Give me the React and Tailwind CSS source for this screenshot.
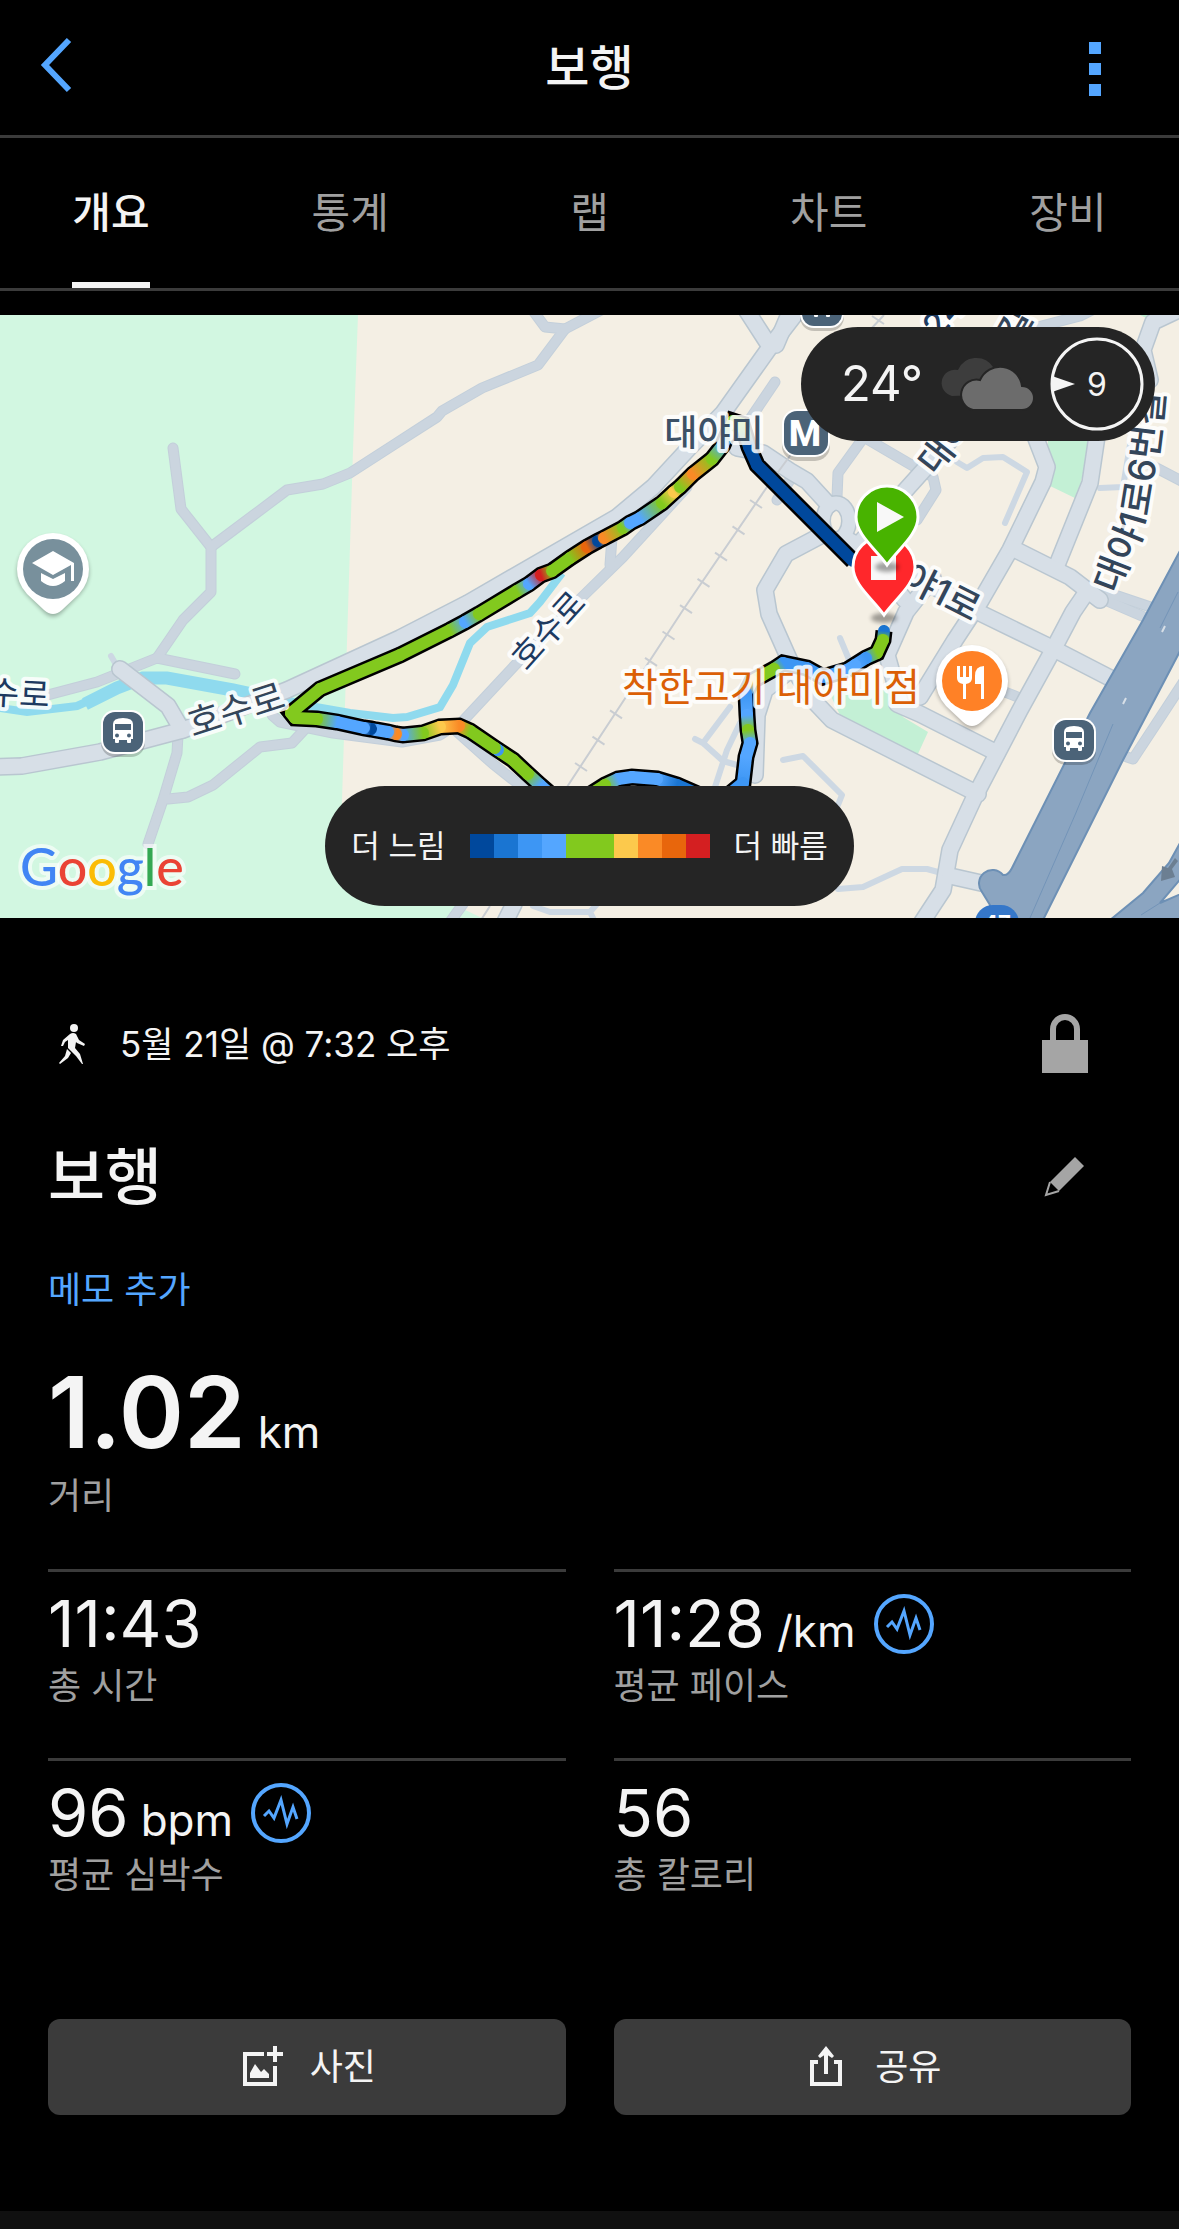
import { useState } from "react";

const TABS = ["개요", "통계", "랩", "차트", "장비"];

const LEGEND = [
  "bg-[#00489c]",
  "bg-[#1a75d2]",
  "bg-[#3d96f4]",
  "bg-[#54a6ff]",
  "bg-[#82c91e]",
  "bg-[#82c91e]",
  "bg-[#fcc94c]",
  "bg-[#fa8a26]",
  "bg-[#e8660c]",
  "bg-[#d41f21]",
];

const STATS = [
  { value: "11:43", label: "총 시간" },
  { value: "11:28", unit: "/km", label: "평균 페이스", chart: true },
  { value: "96", unit: "bpm", label: "평균 심박수", chart: true },
  { value: "56", label: "총 칼로리" },
];

// pace colours
const N = "#00489c";
const D = "#1a75d2";
const B = "#54a6ff";
const M = "#3d96f4";
const G = "#82c91e";
const Y = "#fcc94c";
const O = "#fa8a26";
const P = "#e8660c";
const R = "#d41f21";

const TRACK = [
  [884, 631, D], [883, 640, G], [877, 653, G], [866, 658, M], [855, 665, B], [847, 670, B],
  [823, 677, M], [807, 668, M], [783, 663, M], [774, 669, G], [763, 675, G], [752, 681, Y],
  [746, 693, M], [747, 715, B], [748, 730, G], [750, 743, B], [746, 757, B], [743, 783, M],
  [726, 797, M], [700, 795, D], [677, 785, D], [657, 779, B], [632, 777, B], [618, 779, B], [605, 785, G],
  [583, 799, G], [556, 799, B], [540, 785, B], [528, 774, G], [513, 760, G], [501, 752, G],
  [498, 750, M], [495, 748, G], [470, 731, G], [459, 726, O], [440, 727, Y], [423, 733, G],
  [403, 735, B], [396, 734, O], [388, 732, B], [376, 730, B], [371, 729, N], [364, 728, B],
  [337, 722, B], [317, 719, G], [295, 718, G], [291, 713, G], [320, 689, G], [400, 655, G], [450, 630, G],
  [465, 622, B], [479, 614, G], [517, 591, G], [529, 584, B], [541, 575, R], [552, 571, G], [570, 558, G], [587, 547, P],
  [598, 541, N], [604, 538, O], [623, 528, G], [630, 523, B], [640, 518, B], [662, 503, G],
  [674, 492, Y], [680, 487, G], [693, 474, O], [712, 459, G], [723, 445, B], [733, 421, G],
  [742, 424, G], [749, 447, N], [757, 465, N], [790, 498, N], [853, 561, N],
];

const MAJOR = [
  "M-10 767 L22 766 L100 752 L183 730 L287 690 L400 638 L468 603 L617 517 L653 487 L690 447 L723 413 L770 347 L800 308",
  "M120 669 L168 706 L182 730",
  "M767 342 L745 308",
  "M737 448 L763 453 L790 471 L807 481 L829 505",
  "M820 536 L786 554 L765 590 L769 614 L793 668 L813 700 L832 720 L897 753 L978 794",
  "M793 668 L765 690 L757 715 L755 775",
  "M905 600 L860 543 L903 493 L957 433",
  "M848 540 L905 570 L980 613 L1050 647 L1112 679",
  "M933 578 L906 612 L887 655 L901 705",
  "M897 704 L920 714 L997 753",
  "M1035 436 L1047 467 L1043 482 L1010 550 L980 602 L955 640 L920 697",
  "M1097 436 L1090 483 L1057 565",
  "M1012 548 L1070 577 L1100 600",
  "M1088 590 L1073 612 L1053 650 L1020 710 L974 798 L950 850 L943 890 L922 922",
  "M950 876 L990 885",
  "M1200 300 L1153 322 L1143 350 L1150 380",
  "M795 300 L776 345",
  "M514 904 L504 924",
];

const MINOR = [
  "M173 448 L181 509 L211 547 L211 592 L183 620 L157 658",
  "M211 547 L287 490 L323 484 L350 473 L395 444 L437 417 L442 411 L482 388 L538 365 L565 329 L545 327 L531 308",
  "M565 329 L605 308",
  "M40 697 L97 682 L157 658 L235 674",
  "M178 735 L177 753 L163 800 L148 844",
  "M168 799 L188 797 L213 785 L260 747 L292 743 L306 728",
  "M272 715 L280 722 L333 733 L402 742 L440 735 L457 724",
  "M455 730 L493 764 L526 790",
  "M462 722 L517 663 L577 602 L623 557 L687 487",
  "M612 537 L610 565",
  "M775 382 L748 422",
  "M837 497 L838 473 L864 437",
  "M862 436 L920 470 L933 477 L936 490 L917 520",
  "M1100 590 L1180 617",
  "M1005 692 L1020 698",
  "M1145 462 L1195 488",
  "M1190 672 L1160 718 L1133 759 L1127 757",
  "M463 904 L450 922",
  "M790 480 L777 500",
  "M1030 329 L1080 316 L1100 306",
  "M1105 600 L1142 616",
];

const THIN = [
  "M111 656 L118 668",
  "M957 462 L967 468 L983 458 L1003 457 L1027 472 L1005 523",
  "M1100 488 L1123 487 L1130 445",
  "M783 760 L803 756 L842 795 L838 805",
  "M838 889 L863 887 L902 869 L927 869 L938 872",
  "M840 638 L850 662",
  "M730 707 L703 743 L695 739 M703 743 L723 761 L737 765 M740 723 L727 750 L715 787",
  "M533 906 L550 912 L590 912 L597 904 M590 912 L595 922",
];

const TIES = Array.from({ length: 13 }, (_, i) => [756 - i * 17.5, 504 + i * 26.3]).filter(([, y]) => y < 795);

function MapLabel({ size = 36, fill = "#33455a", weight = 500, ...rest }) {
  return (
    <text
      fontSize={size}
      fontWeight={weight}
      fill={fill}
      stroke="#ffffff"
      strokeOpacity="0.85"
      strokeWidth="8"
      strokeLinejoin="round"
      paintOrder="stroke"
      {...rest}
    />
  );
}

function BusStop({ x, y }) {
  return (
    <g transform={`translate(${x} ${y})`}>
      <rect x="-22" y="-19" width="44" height="44" rx="14" fill="#000" opacity="0.2" />
      <rect x="-22" y="-22" width="44" height="44" rx="14" fill="#fff" />
      <rect x="-20" y="-20" width="40" height="40" rx="12" fill="#4b6378" />
      <path
        fillRule="evenodd"
        fill="#fff"
        d="M-10 -8 Q-10 -14 0 -14 Q10 -14 10 -8 V7 H8 V10 Q8 11 7 11 H5 Q4 11 4 10 V8 H-4 V10 Q-4 11 -5 11 H-7 Q-8 11 -8 10 V7 H-10 Z M-8 -8 V-2 H8 V-8 Z M-6 1.500 A2 2 0 1 0 -6 5.500 A2 2 0 1 0 -6 1.500 Z M6 1.500 A2 2 0 1 0 6 5.500 A2 2 0 1 0 6 1.500 Z"
      />
    </g>
  );
}

function PlacePin({ x, y, color, children }) {
  return (
    <g transform={`translate(${x} ${y})`}>
      <path d="M-36 3 A36 36 0 1 1 36 3 Q36 15 26 26 L9 43 Q0 52 -9 43 L-26 26 Q-36 15 -36 3 Z" fill="#000" opacity="0.3" className="blur-[2px]" />
      <path d="M-36 0 A36 36 0 1 1 36 0 Q36 14 26 25 L9 41 Q0 49 -9 41 L-26 25 Q-36 14 -36 0 Z" fill="#fff" />
      <circle r="30" fill={color} />
      {children}
    </g>
  );
}

function RouteMap() {
  const line = TRACK.map(([x, y]) => `${x},${y}`).join(" ");

  return (
    <svg
      className="block h-full w-full font-['Inter','Noto_Sans_CJK_KR',sans-serif]"
      viewBox="0 315 1179 603"
      preserveAspectRatio="xMidYMid slice"
      role="img"
      aria-label="경로 지도"
    >
      <defs>
        {TRACK.slice(1).map(([x, y, c], i) => (
          <linearGradient key={i} id={`seg${i}`} gradientUnits="userSpaceOnUse" x1={TRACK[i][0]} y1={TRACK[i][1]} x2={x} y2={y}>
            <stop offset="0" stopColor={TRACK[i][2]} />
            <stop offset="1" stopColor={c} />
          </linearGradient>
        ))}
        <path id="street6" d="M1118 595 C1128 562 1142 545 1149 510 C1157 460 1162 440 1168 340" />
      </defs>

      {/* Terrain */}
      <rect x="-600" y="315" width="2400" height="603" fill="#f4efe4" />
      <path d="M-600 315 H358 L353 450 L348 610 L342 800 L340 860 L457 906 L482 918 H-600 Z" fill="#d2f7e1" />
      <path d="M1048 430 H1089 L1086 460 L1077 499 L1048 485 Z M828 690 L890 690 L903 717 L928 732 L917 756 L840 715 Z M1140 315 H1150 L1148 319 Z" fill="#c3f0d5" />

      {/* Water */}
      <g fill="none" stroke="#8fdaee">
        <path d="M0 708 L27 712 L77 706 L117 688" strokeWidth="8" />
        <path d="M85 704 L117 688 L143 678 L167 678 L233 690 L290 702" strokeWidth="13" />
        <path d="M285 700 L310 706 L350 713 L393 718 L407 717 L440 707 L453 685 L470 643 L487 627 L530 613 L540 602 L562 573" strokeWidth="8" />
      </g>

      {/* Roads */}
      <g fill="none" strokeLinecap="round" strokeLinejoin="round">
        {THIN.map((d) => (
          <path key={d} d={d} stroke="#cdd8e3" strokeWidth="6" />
        ))}
        {MINOR.map((d) => (
          <path key={d} d={d} stroke="#c3cfda" strokeWidth="11" />
        ))}
        {MINOR.map((d) => (
          <path key={d} d={d} stroke="#cbd5df" strokeWidth="9" />
        ))}
        {MAJOR.map((d) => (
          <path key={d} d={d} stroke="#b9c6d0" strokeWidth="18" />
        ))}
        <ellipse cx="836" cy="521" rx="13" ry="18" stroke="#b9c6d0" strokeWidth="16" />
        {MAJOR.map((d) => (
          <path key={d} d={d} stroke="#d7dfe7" strokeWidth="15" />
        ))}
        <ellipse cx="836" cy="521" rx="13" ry="18" stroke="#d7dfe7" strokeWidth="13" />
      </g>

      {/* Railway */}
      <g stroke="#c9cdd2" fill="none">
        <path d="M795 449 L767 487 L683 610 L565 790 M490 906 L481 920 M884 315 L870 330" strokeWidth="2" />
        {TIES.map(([x, y]) => (
          <path key={x} d={`M${x - 6} ${y - 4} l12 8`} strokeWidth="2" />
        ))}
        <path d="M872 316 l12 8" strokeWidth="2" />
      </g>

      {/* Expressway */}
      <g fill="#8ba5c1" stroke="#6d90b5" strokeWidth="2">
        <path d="M1190 532 L1143 620 L1090 713 L1012 868 Q1008 876 1003 875 A13 13 0 0 0 982 892 L990 905 L990 930 H1038 L1123 760 L1190 632 Z" />
        <path d="M1190 825 L1169 863 L1143 893 L1104 925 H1190 Z" />
        <path d="M1190 868 L1160 903 L1190 890 Z" fill="#f4efe4" />
      </g>
      <path d="M1113 724 L1075 815 L1030 918 M1160 628 L1178 592 M1160 903 L1141 915" stroke="#7394b8" fill="none" />
      <path d="M1123 704 l3 -6 M1162 632 l3 -6" stroke="#d7dfe7" strokeWidth="2" />
      <path d="M1175 858 L1178 861 L1172 869 L1175 877 L1161 881 L1162 866 L1168 868 Z" fill="#6c7f92" />
      <rect x="975" y="905" width="44" height="40" rx="18" fill="#3577c9" />
      <text x="997" y="931" fontSize="22" fontWeight="700" fill="#fff" textAnchor="middle">47</text>

      {/* Recorded track */}
      <polyline points={line} fill="none" stroke="#000" strokeWidth="17" strokeLinejoin="miter" />
      <g strokeWidth="12" strokeLinecap="round">
        {TRACK.slice(1).map(([x, y], i) => (
          <line key={i} x1={TRACK[i][0]} y1={TRACK[i][1]} x2={x} y2={y} stroke={`url(#seg${i})`} />
        ))}
      </g>

      {/* Street names */}
      <MapLabel x="714" y="446" textAnchor="middle" fill="#3d5166">대야미</MapLabel>
      <MapLabel x="771" y="701" size={39} textAnchor="middle" fill="#db5f06" weight={400}>착한고기 대야미점</MapLabel>
      <MapLabel weight={400} textAnchor="middle" transform="translate(240 722) rotate(-18)">호수로</MapLabel>
      <MapLabel size={33} weight={400} fill="#1d3a60" textAnchor="middle" transform="translate(557 638) rotate(-48)">호수로</MapLabel>
      <MapLabel size={33} weight={400} fill="#1d3a60" textAnchor="end" transform="translate(49 707) rotate(3)">호수로</MapLabel>
      <MapLabel transform="translate(936 477) rotate(-52)">대야1로</MapLabel>
      <MapLabel textAnchor="end" transform="translate(972 622) rotate(27)">대야1로</MapLabel>
      <MapLabel size={34} fill="#1d3a60" transform="translate(938 340) rotate(-48)">24</MapLabel>
      <MapLabel size={34} textAnchor="middle" transform="translate(1018 345) rotate(-60)">번길</MapLabel>
      <MapLabel size={37}>
        <textPath href="#street6">대야1로6번길</textPath>
      </MapLabel>

      {/* Places */}
      <BusStop x={123} y={732} />
      <BusStop x={1074} y={740} />
      <BusStop x={822} y={306} />
      <rect x="782" y="413" width="48" height="48" rx="15" fill="#000" opacity="0.2" />
      <rect x="782" y="409" width="48" height="48" rx="15" fill="#fff" />
      <rect x="784" y="411" width="44" height="44" rx="13" fill="#4b6378" />
      <text x="805" y="446" className="font-['Roboto',sans-serif]" fontSize="37" fontWeight="800" fill="#fff" textAnchor="middle">M</text>

      <PlacePin x={53} y={569} color="#78909c">
        <path d="M-21 -6 L0 -18 L21 -6 V12 H18 V-4 L0 6 Z M-12 4 L0 10 L12 4 V12 Q6 17 0 17 Q-6 17 -12 12 Z" fill="#fff" />
      </PlacePin>
      <PlacePin x={972} y={681} color="#ff8126">
        <path d="M-15 -15 h3 v11 h3 v-11 h3 v11 h3 v-11 h3 v12 q0 5 -6 6 v15 h-3 v-15 q-6 -1 -6 -6 z M12 -15 V18 H9 V3 H3 V-5 Q3 -15 12 -15 Z" fill="#fff" />
      </PlacePin>

      {/* Finish and start markers */}
      <g stroke="#fff" strokeWidth="3">
        <ellipse cx="884" cy="618" rx="13" ry="5" fill="#000" opacity="0.35" stroke="none" className="blur-[2px]" />
        <path d="M884 615 C874 600 853 585 853 567 A31 31 0 0 1 915 567 C915 585 894 600 884 615 Z" fill="#ff272b" />
        <rect x="871" y="556" width="25" height="24" fill="#f8f8f8" stroke="none" />
        <ellipse cx="887" cy="567" rx="12" ry="5" fill="#000" opacity="0.35" stroke="none" className="blur-[2px]" />
        <path d="M887 565 C877 550 856 535 856 517 A31 31 0 0 1 918 517 C918 535 897 550 887 565 Z" fill="#48b300" />
        <path d="M877 502 L904 517 L877 532 Z" fill="#f8f8f8" stroke="none" />
      </g>
    </svg>
  );
}

function WaveIcon() {
  return (
    <svg width="60" height="60" viewBox="0 0 60 60" fill="none" stroke="#54a6ff" aria-hidden="true">
      <circle cx="30" cy="30" r="28" strokeWidth="4" />
      <path d="M13 33 L18 28 L23 35 L30 17 L36 41 L42 24 L46 36" strokeWidth="3" />
    </svg>
  );
}

function Stat({ value, unit, label, chart }) {
  return (
    <div className="border-t-[3px] border-[#3b3b3b] pt-5 pb-12">
      <div className="flex h-16 items-center gap-[18px]">
        <div className="flex items-baseline gap-3">
          <span className="text-[65px] leading-[64px]">{value}</span>
          {unit && <span className="text-[44px] leading-[44px]">{unit}</span>}
        </div>
        {chart && (
          <button type="button" aria-label={`${label} 차트`}>
            <WaveIcon />
          </button>
        )}
      </div>
      <p className="mt-1.5 text-[36px] leading-[48px] text-[#a0a0a0]">{label}</p>
    </div>
  );
}

export default function App() {
  const [tab, setTab] = useState("개요");

  return (
    <div className="flex min-h-screen flex-col bg-black font-['Inter','Noto_Sans_CJK_KR',sans-serif] text-[#f4f4f4]">
      <header className="flex h-[138px] items-center justify-between border-b-[3px] border-[#3b3b3b]">
        <button type="button" aria-label="뒤로" className="w-40 pb-1.5 pl-9">
          <svg width="40" height="60" viewBox="0 0 40 60" fill="none" stroke="#54a6ff" strokeWidth="6">
            <path d="M33 5 L9 30 L33 55" />
          </svg>
        </button>
        <h1 className="text-[48px] leading-[64px] font-medium">보행</h1>
        <button type="button" aria-label="더보기" className="flex w-40 flex-col items-end gap-[9px] pt-0.5 pr-[78px]">
          <span className="size-3 bg-[#54a6ff]" />
          <span className="size-3 bg-[#54a6ff]" />
          <span className="size-3 bg-[#54a6ff]" />
        </button>
      </header>

      <nav role="tablist" className="flex h-[153px] justify-between border-b-[3px] border-[#3b3b3b] px-[72px]">
        {TABS.map((t) => (
          <button
            key={t}
            type="button"
            role="tab"
            aria-selected={tab === t}
            onClick={() => setTab(t)}
            className={`w-[78px] border-b-[6px] pt-1.5 text-center text-[42px] leading-[60px] whitespace-nowrap ${
              tab === t ? "border-[#f4f4f4] font-medium" : "border-transparent text-[#a0a0a0]"
            }`}
          >
            {t}
          </button>
        ))}
      </nav>

      <section className="relative mt-6 h-[603px] overflow-hidden">
        <RouteMap />

        {/* Weather */}
        <div className="absolute top-3 right-6 flex h-[114px] items-center rounded-full bg-[#252525] pr-2.5 pl-10">
          <span className="w-[98px] text-[49px] leading-[60px]">24°</span>
          <svg width="96" height="54" viewBox="0 0 96 54" aria-label="흐림">
            <path d="M13 39 A13 13 0 1 1 19 13 A20 20 0 0 1 54 10 L40 38 Z" fill="#3d3d3d" />
            <g fill="#6c6c6c" stroke="#252525" strokeWidth="2">
              <path d="M34 53 A15 15 0 1 1 41 23 A22 22 0 0 1 83 29 A12 12 0 0 1 83 53 Z" />
            </g>
          </svg>
          <svg className="ml-3.5" width="96" height="96" viewBox="0 0 96 96" aria-label="바람 9">
            <circle cx="48" cy="48" r="45" fill="none" stroke="#f4f4f4" strokeWidth="3" />
            <path d="M3 40 L26 48 L3 56 Z" fill="#f4f4f4" />
            <text x="48" y="60" fontSize="32" fill="#f4f4f4" textAnchor="middle">9</text>
          </svg>
        </div>

        {/* Pace legend */}
        <div className="absolute inset-x-0 bottom-3 flex justify-center">
          <div className="flex h-[120px] items-center gap-6 rounded-full bg-[#252525] px-[26px] text-[31px] leading-[48px]">
            <span>더 느림</span>
            <div className="flex">
              {LEGEND.map((c, i) => (
                <span key={i} className={`size-6 ${c}`} />
              ))}
            </div>
            <span>더 빠름</span>
          </div>
        </div>

        <div
          aria-label="Google"
          className="absolute bottom-5 left-5 font-['Lato',sans-serif] text-[52px] leading-[64px] font-medium [paint-order:stroke] [-webkit-text-stroke:8px_rgba(255,255,255,0.6)]"
        >
          <span className="text-[#4285f4]">G</span>
          <span className="text-[#ea4335]">o</span>
          <span className="text-[#fbbc05]">o</span>
          <span className="text-[#4285f4]">g</span>
          <span className="text-[#34a853]">l</span>
          <span className="text-[#ea4335]">e</span>
        </div>
      </section>

      <main className="flex-1 px-12 pt-24 pb-24">
        <div className="flex h-[60px] items-center">
          <svg width="48" height="48" viewBox="0 0 48 48" fill="#f4f4f4" aria-hidden="true">
            <circle cx="26" cy="8" r="4" />
            <path d="M22 14 Q25 12 28 14 L31 20 L37 24 L36 26 L29 23 L28 22 L27 28 L32 34 L35 44 L34 44 L28 36 L21 29 L20 28 L20 20 L17 22 L15 26 L13 26 L15 20 Z" />
            <path d="M19 29 L23 33 L20 38 L12 44 L11 43 L17 36 Z" />
          </svg>
          <time className="ml-6 flex-1 text-[35px] leading-[48px]">5월 21일 @ 7:32 오후</time>
          <button type="button" aria-label="공개 설정" className="mr-[42px]">
            <svg width="48" height="60" viewBox="0 0 48 60">
              <path d="M12 28 V15 A12 12 0 0 1 36 15 V28" fill="none" stroke="#a5a5a5" strokeWidth="6" />
              <path d="M1 26 H47 V59 H1 Z" fill="#a5a5a5" />
            </svg>
          </button>
        </div>

        <div className="mt-16 flex h-[76px] items-center justify-between">
          <h2 className="pt-1 text-[62px] leading-[72px] font-medium">보행</h2>
          <button type="button" aria-label="이름 편집" className="mr-[42px]">
            <svg width="48" height="48" viewBox="0 0 48 48">
              <path d="M34 5 L43 14 L18 39 L9 30 Z" fill="#a5a5a5" />
              <path d="M9 30 L5 43 L18 39" fill="none" stroke="#a5a5a5" strokeWidth="2" />
            </svg>
          </button>
        </div>

        <button type="button" className="mt-[52px] block text-[36px] leading-[48px] text-[#54a6ff]">
          메모 추가
        </button>

        <div className="mt-[50px] flex items-baseline gap-3">
          <span className="text-[99px] leading-[96px] font-semibold">1.02</span>
          <span className="text-[44px] leading-[44px]">km</span>
        </div>
        <p className="mt-3 text-[36px] leading-[48px] text-[#a0a0a0]">거리</p>

        <div className="mt-[49px] grid grid-cols-2 gap-x-12">
          {STATS.map((s) => (
            <Stat key={s.label} {...s} />
          ))}
        </div>

        <div className="mt-[72px] grid grid-cols-2 gap-12">
          <button type="button" className="flex h-24 items-center justify-center gap-6 rounded-xl bg-[#3b3b3b] text-[36px] leading-[48px]">
            <svg width="48" height="48" viewBox="0 0 48 48" fill="none" stroke="#f4f4f4" strokeWidth="4" aria-hidden="true">
              <path d="M26 11 H7 V41 H37 V23" />
              <path d="M37 3 V19 M29 11 H45" />
              <path d="M12 35 V30 L17 21 L23 29 L26 26 L31 31 V35 Z" fill="#f4f4f4" stroke="none" />
            </svg>
            사진
          </button>
          <button type="button" className="flex h-24 items-center justify-center gap-6 rounded-xl bg-[#3b3b3b] text-[36px] leading-[48px]">
            <svg width="48" height="48" viewBox="0 0 48 48" fill="none" stroke="#f4f4f4" strokeWidth="4" aria-hidden="true">
              <path d="M15 19 H9 V41 H37 V19 H31" />
              <path d="M23 9 V31" />
              <path d="M23 3 L31 13 L29 15 L23 11 L17 15 L15 13 Z" fill="#f4f4f4" stroke="none" />
            </svg>
            공유
          </button>
        </div>
      </main>

      <div className="h-[18px] bg-[#101010]" />
    </div>
  );
}
